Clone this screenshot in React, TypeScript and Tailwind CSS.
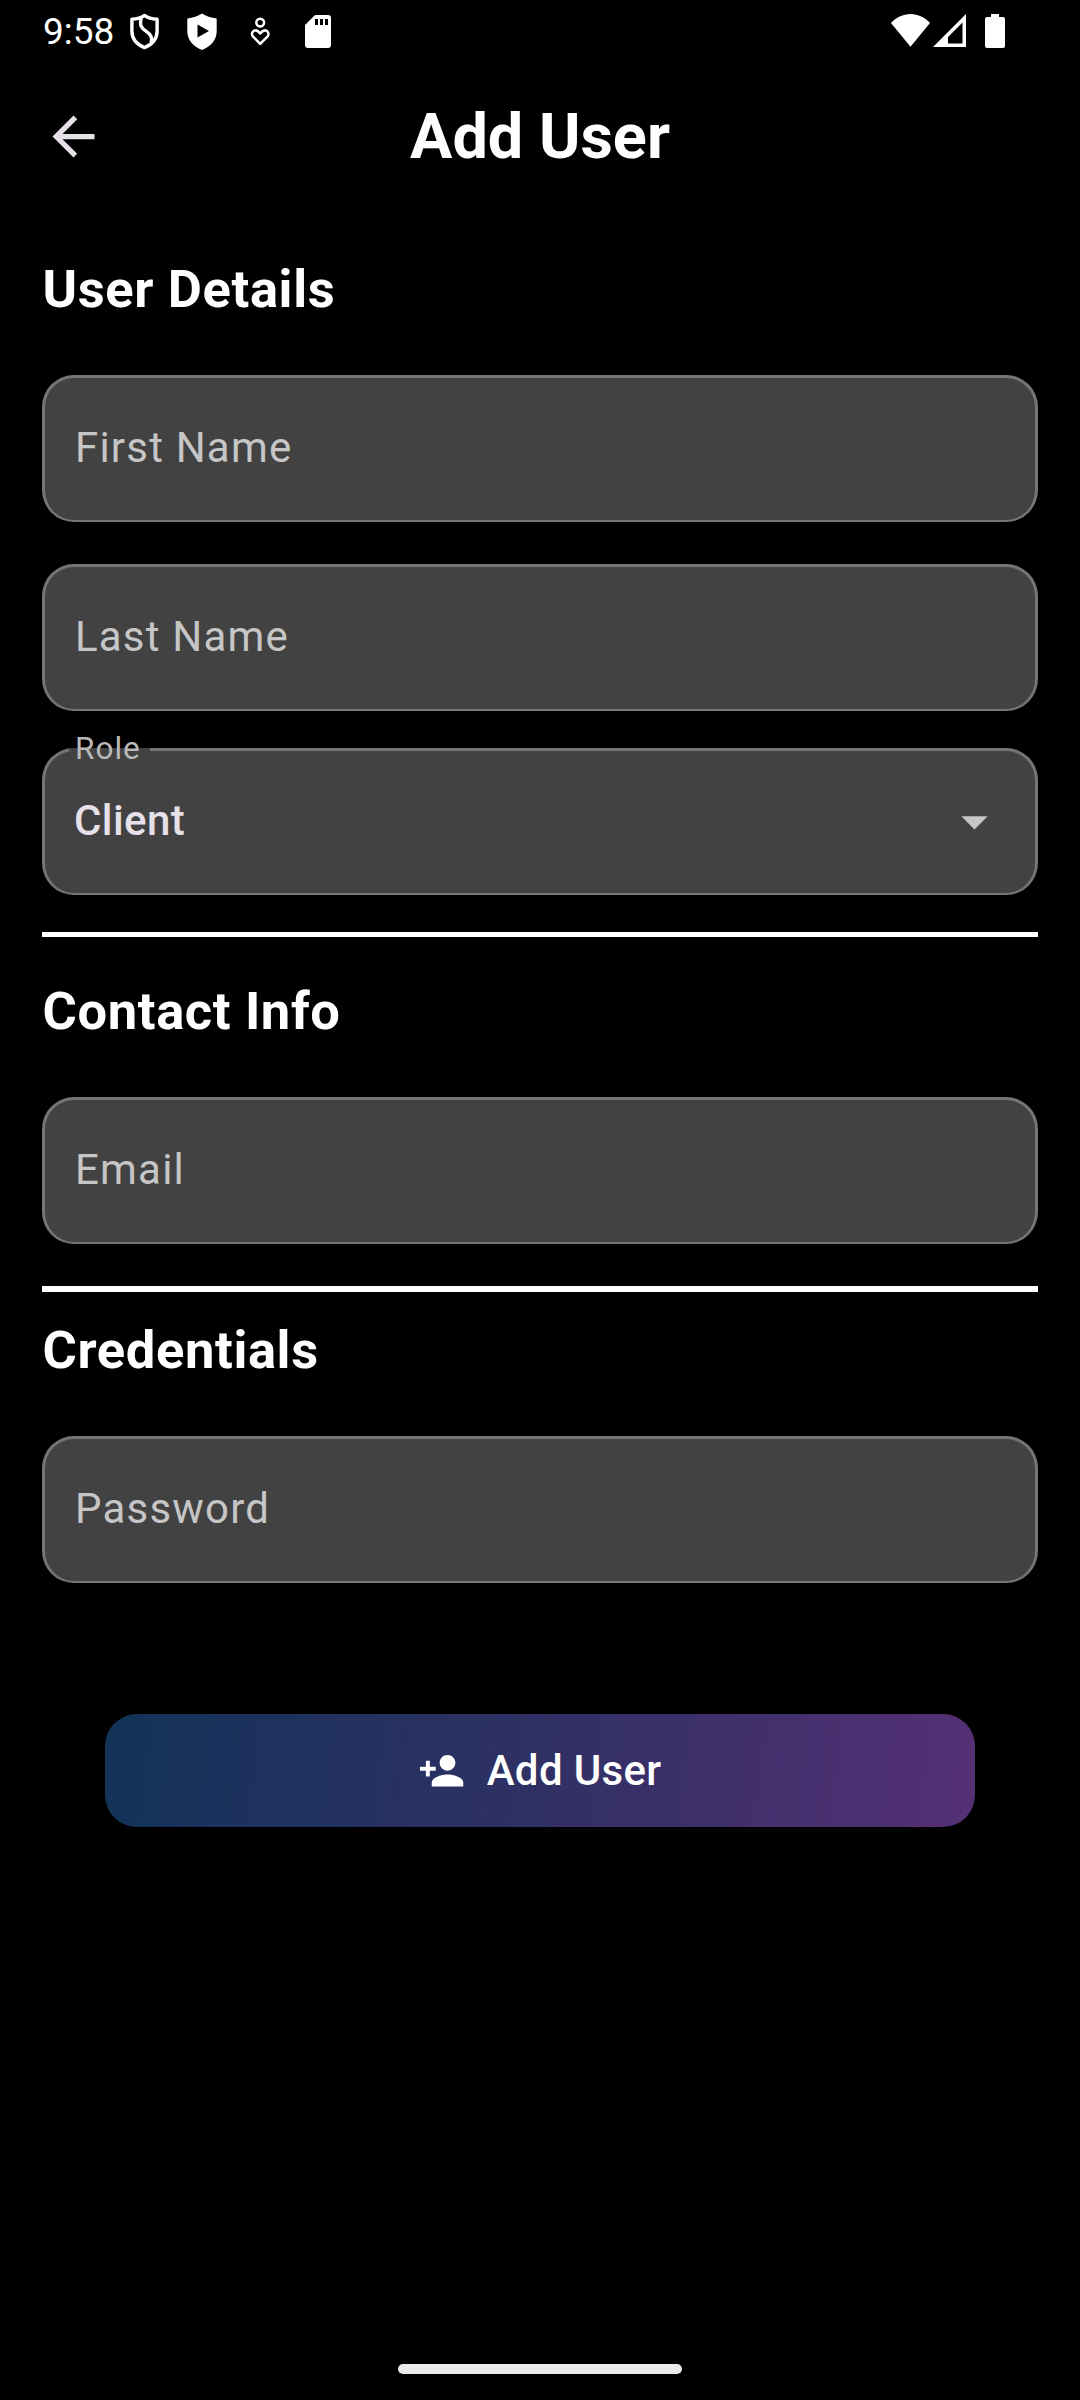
import React from "react";

function Field({ label }: { label: string }) {
  return (
    <div className="flex h-[147px] items-center rounded-[32px] border-2 border-t-3 border-l-3 border-r-3 border-[#757575] bg-[#424242] px-[30px] pb-[3px] text-[42px] leading-[48px] tracking-[1.2px] text-[#c6c6c6]">
      {label}
    </div>
  );
}

function Heading({ children }: { children: React.ReactNode }) {
  return (
    <h2 className="h-[60px] pl-[0.5px] text-[52.5px] leading-[60px] font-bold tracking-[0.62px] text-white">
      {children}
    </h2>
  );
}

function StatusBar() {
  return (
    <div className="flex h-[63px] items-start justify-between pl-[43px] pr-[75px] text-white">
      <div className="flex items-start">
        <span className="mt-[10px] w-[87px] text-[37px] leading-[43px]">9:58</span>
        <svg className="mt-[13px]" width="29" height="37" viewBox="0 0 29 37" fill="none" stroke="currentColor" strokeWidth="3.4" strokeLinejoin="round">
          <path d="M14.5 2.4C11 5 6.5 6 1.9 6.2V18c0 7.5 5 13.5 12.6 16.6C22 31.500 27.100 25.500 27.100 18V6.200C22.500 6 18 5 14.500 2.400Z" />
          <path d="M11.500 4C9 12.500 11.500 15 16 18.200C21.500 22 22.500 25 21 30" />
        </svg>
        <svg className="mt-[13px] ml-[28px]" width="30" height="38" viewBox="0 0 30 38" fill="currentColor">
          <path fillRule="evenodd" d="M15 .5C11 3.300 6 4.800.300 5.500V18C.300 27 6 33.500 15 37C24 33.500 29.700 27 29.700 18V5.500C24 4.800 19 3.300 15 .5ZM10.500 11.500V24.500L22 18Z" />
        </svg>
        <svg className="mt-[17px] ml-[33px]" width="21" height="30" viewBox="0 0 21 30" fill="none" stroke="currentColor" strokeWidth="2.500">
          <circle cx="10.200" cy="5.600" r="3.900" />
          <path d="M10.200 26.800L3 19.600C-.5 15.500 5.500 10 10.200 16.500C15 10 21 15.500 17.400 19.600Z" strokeLinejoin="round" />
        </svg>
        <svg className="mt-[15px] ml-[34px]" width="26" height="33" viewBox="0 0 26 33" fill="currentColor">
          <path fillRule="evenodd" d="M10 0H23Q26 0 26 3V30Q26 33 23 33H3Q0 33 0 30V10ZM10 4V10H13V4ZM15 4V10H18V4ZM20 4V10H23V4Z" />
        </svg>
      </div>
      <div className="flex items-start pt-[14px]">
        <svg width="39" height="33" viewBox="0 0 39 33" fill="currentColor">
          <path d="M0 9C5 3.500 12 0 19.500 0S34 3.500 39 9L19.500 32.700Z" />
        </svg>
        <svg className="ml-[3px]" width="33" height="33" viewBox="0 0 33 33" fill="currentColor">
          <path fillRule="evenodd" d="M33 0V33H0ZM29.500 8.500L15 23V29.500H29.500Z" />
        </svg>
        <svg className="ml-[19px]" width="20" height="34" viewBox="0 0 20 34" fill="currentColor">
          <path d="M6 0H14V3H18Q20 3 20 5V32Q20 34 18 34H2Q0 34 0 32V5Q0 3 2 3H6Z" />
        </svg>
      </div>
    </div>
  );
}

export default function App() {
  return (
    <div className="flex h-[2400px] w-[1080px] flex-col overflow-hidden bg-black font-[Roboto,sans-serif]">
      <StatusBar />
      <header className="grid h-[147px] grid-cols-[63px_1fr_63px] items-center px-[42px]">
        <svg width="63" height="63" viewBox="0 0 24 24" fill="#e6e0e9">
          <path d="M20 11H7.830l5.590-5.590L12 4l-8 8 8 8 1.410-1.410L7.830 13H20v-2z" />
        </svg>
        <h1 className="text-center text-[63px] leading-[74px] font-bold text-white">Add User</h1>
      </header>
      <main className="flex flex-col px-[42px] pt-[49px]">
        <Heading>User Details</Heading>
        <div className="mt-[56px] flex flex-col gap-[42px]">
          <Field label="First Name" />
          <Field label="Last Name" />
        </div>
        <div className="relative mt-[37px] flex h-[147px] items-center justify-between rounded-[32px] border-2 border-t-3 border-r-3 border-l-3 border-[#757575] bg-[#424242] pr-[29px] pb-[3px] pl-[29px]">
          <span className="absolute -top-[3px] left-[24px] h-[3px] w-[81px] bg-[#424242]" />
          <span className="absolute -top-[21px] left-[30px] text-[31.5px] leading-[37px] tracking-[1px] text-[#b9b9b9]">Role</span>
          <span className="text-[42px] leading-[48px] font-medium tracking-[0.4px] text-[#e6e0e9]">Client</span>
          <svg className="mt-[2px]" width="63" height="63" viewBox="0 0 24 24" fill="#c6c6c6">
            <path d="M7 10l5 5 5-5z" />
          </svg>
        </div>
        <hr className="mt-[37px] h-[5px] border-0 bg-white" />
        <div className="mt-[44px]">
          <Heading>Contact Info</Heading>
        </div>
        <div className="mt-[56px]">
          <Field label="Email" />
        </div>
        <hr className="mt-[42px] h-[6px] border-0 bg-white" />
        <div className="mt-[28px]">
          <Heading>Credentials</Heading>
        </div>
        <div className="mt-[56px]">
          <Field label="Password" />
        </div>
        <button className="mx-[63px] mt-[131px] flex h-[113px] items-center justify-center gap-[21px] rounded-[32px] bg-[linear-gradient(97.4deg,#123358,#303065_50%,#553075)] text-[42px] leading-[48px] font-medium tracking-[0.36px] text-white">
          <svg width="47.250" height="47.250" viewBox="0 0 24 24" fill="currentColor">
            <path d="M15 12c2.210 0 4-1.790 4-4s-1.790-4-4-4-4 1.790-4 4 1.790 4 4 4zm-9-2V7H4v3H1v2h3v3h2v-3h3v-2H6zm9 4c-2.670 0-8 1.340-8 4v2h16v-2c0-2.660-5.330-4-8-4z" />
          </svg>
          Add User
        </button>
      </main>
      <div className="mx-auto mt-auto mb-[26px] h-[10px] w-[284px] rounded-full bg-[#ebebeb]" />
    </div>
  );
}
